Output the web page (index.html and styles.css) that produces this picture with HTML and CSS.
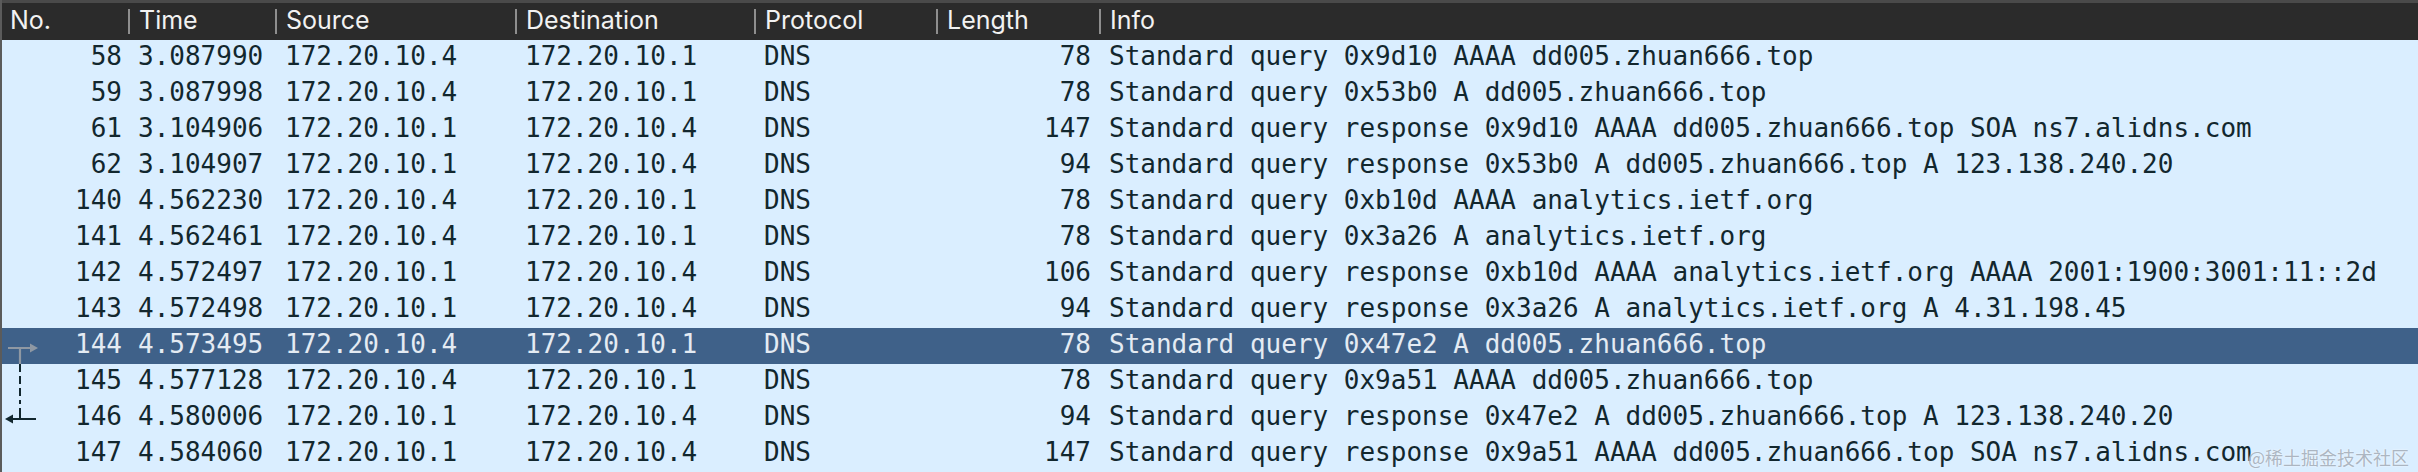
FILE: index.html
```html
<!DOCTYPE html>
<html>
<head>
<meta charset="utf-8">
<link rel="stylesheet" href="styles.css">
</head>
<body>
<div class="pane">
  <div class="head">
    <div class="hc first">No.</div>
    <div class="hc">Time</div>
    <div class="hc">Source</div>
    <div class="hc">Destination</div>
    <div class="hc">Protocol</div>
    <div class="hc">Length</div>
    <div class="hc">Info</div>
  </div>
  <div class="rows">
    <div class="row"><div class="c num"><span class="mark"></span>58</div><div class="c">3.087990</div><div class="c">172.20.10.4</div><div class="c">172.20.10.1</div><div class="c">DNS</div><div class="c r">78</div><div class="c">Standard query 0x9d10 AAAA dd005.zhuan666.top</div></div>
    <div class="row"><div class="c num"><span class="mark"></span>59</div><div class="c">3.087998</div><div class="c">172.20.10.4</div><div class="c">172.20.10.1</div><div class="c">DNS</div><div class="c r">78</div><div class="c">Standard query 0x53b0 A dd005.zhuan666.top</div></div>
    <div class="row"><div class="c num"><span class="mark"></span>61</div><div class="c">3.104906</div><div class="c">172.20.10.1</div><div class="c">172.20.10.4</div><div class="c">DNS</div><div class="c r">147</div><div class="c">Standard query response 0x9d10 AAAA dd005.zhuan666.top SOA ns7.alidns.com</div></div>
    <div class="row"><div class="c num"><span class="mark"></span>62</div><div class="c">3.104907</div><div class="c">172.20.10.1</div><div class="c">172.20.10.4</div><div class="c">DNS</div><div class="c r">94</div><div class="c">Standard query response 0x53b0 A dd005.zhuan666.top A 123.138.240.20</div></div>
    <div class="row"><div class="c num"><span class="mark"></span>140</div><div class="c">4.562230</div><div class="c">172.20.10.4</div><div class="c">172.20.10.1</div><div class="c">DNS</div><div class="c r">78</div><div class="c">Standard query 0xb10d AAAA analytics.ietf.org</div></div>
    <div class="row"><div class="c num"><span class="mark"></span>141</div><div class="c">4.562461</div><div class="c">172.20.10.4</div><div class="c">172.20.10.1</div><div class="c">DNS</div><div class="c r">78</div><div class="c">Standard query 0x3a26 A analytics.ietf.org</div></div>
    <div class="row"><div class="c num"><span class="mark"></span>142</div><div class="c">4.572497</div><div class="c">172.20.10.1</div><div class="c">172.20.10.4</div><div class="c">DNS</div><div class="c r">106</div><div class="c">Standard query response 0xb10d AAAA analytics.ietf.org AAAA 2001:1900:3001:11::2d</div></div>
    <div class="row"><div class="c num"><span class="mark"></span>143</div><div class="c">4.572498</div><div class="c">172.20.10.1</div><div class="c">172.20.10.4</div><div class="c">DNS</div><div class="c r">94</div><div class="c">Standard query response 0x3a26 A analytics.ietf.org A 4.31.198.45</div></div>
    <div class="row sel"><div class="c num"><svg class="mark" width="40" height="36" viewBox="0 0 40 36"><path d="M6 20H29M18 20V36" stroke="#8f98a3" stroke-width="2.2" fill="none"/><path d="M28 15.5L36 20L28 24.5Z" fill="#8f98a3"/></svg>144</div><div class="c">4.573495</div><div class="c">172.20.10.4</div><div class="c">172.20.10.1</div><div class="c">DNS</div><div class="c r">78</div><div class="c">Standard query 0x47e2 A dd005.zhuan666.top</div></div>
    <div class="row"><div class="c num"><svg class="mark" width="40" height="36" viewBox="0 0 40 36"><path d="M18 0V36" stroke="#12272e" stroke-width="2" stroke-dasharray="8 4" fill="none"/></svg>145</div><div class="c">4.577128</div><div class="c">172.20.10.4</div><div class="c">172.20.10.1</div><div class="c">DNS</div><div class="c r">78</div><div class="c">Standard query 0x9a51 AAAA dd005.zhuan666.top</div></div>
    <div class="row"><div class="c num"><svg class="mark" width="40" height="36" viewBox="0 0 40 36"><path d="M18 0V4M18 8V19M10 19H34" stroke="#12272e" stroke-width="2" fill="none"/><path d="M11 14.5L3 19L11 23.5Z" fill="#12272e"/></svg>146</div><div class="c">4.580006</div><div class="c">172.20.10.1</div><div class="c">172.20.10.4</div><div class="c">DNS</div><div class="c r">94</div><div class="c">Standard query response 0x47e2 A dd005.zhuan666.top A 123.138.240.20</div></div>
    <div class="row"><div class="c num"><span class="mark"></span>147</div><div class="c">4.584060</div><div class="c">172.20.10.1</div><div class="c">172.20.10.4</div><div class="c">DNS</div><div class="c r">147</div><div class="c">Standard query response 0x9a51 AAAA dd005.zhuan666.top SOA ns7.alidns.com</div></div>
  </div>
  <div class="watermark">@稀土掘金技术社区</div>
</div>
</body>
</html>
```

FILE: styles.css
```css
html, body {
  margin: 0;
  padding: 0;
  background: #daeeff;
}
.pane {
  position: relative;
  width: 2418px;
  height: 472px;
  overflow: hidden;
  box-sizing: border-box;
  border-left: 2px solid #5b5b5b;
  background: #daeeff;
}
.head, .row {
  display: grid;
  grid-template-columns: 126px 147px 240px 239px 182px 163px 1fr;
}
.head {
  height: 40px;
  box-sizing: border-box;
  border-top: 3px solid #4a4a4a;
  background: #2b2b2b;
  color: #f2f2f2;
  font-family: Inter, "Liberation Sans", sans-serif;
  font-size: 25px;
  line-height: 34px;
}
.hc {
  padding-left: 11px;
  white-space: nowrap;
  background: linear-gradient(#8e8e8e, #8e8e8e) left 6px / 2px 25px no-repeat;
}
.hc.first {
  padding-left: 8px;
  background: none;
}
.row {
  height: 36px;
  box-sizing: border-box;
  padding-bottom: 4px;
  font-family: "DejaVu Sans Mono", monospace;
  font-size: 26px;
  line-height: 32px;
  color: #12272e;
}
.row.sel {
  background: #3f6189;
  color: #e4ebf3;
}
.c {
  padding-left: 10px;
  white-space: nowrap;
  overflow: visible;
}
.c.r {
  text-align: right;
  padding-left: 0;
  padding-right: 8px;
}
.c.num {
  display: flex;
  justify-content: space-between;
  padding-left: 0;
  padding-right: 6px;
}
.mark {
  display: block;
  width: 40px;
  height: 36px;
  flex: none;
}
.watermark {
  position: absolute;
  right: 9px;
  bottom: 4px;
  font-family: "Noto Sans CJK SC", sans-serif;
  font-size: 18px;
  line-height: 22px;
  color: rgba(160, 170, 182, 0.85);
  text-shadow: 0 0 2px rgba(255, 255, 255, 0.9);
}
```
